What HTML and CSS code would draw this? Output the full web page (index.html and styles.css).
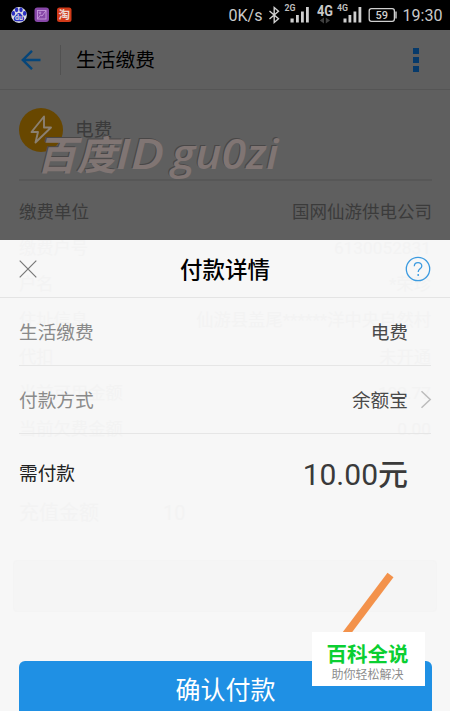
FILE: index.html
```html
<!DOCTYPE html>
<html lang="zh-CN">
<head>
<meta charset="utf-8">
<title>付款详情</title>
<link rel="stylesheet" href="styles.css">
</head>
<body>
<div class="screen">
  <header class="status">
    <svg width="450" height="30" viewBox="0 0 450 30">
      <circle cx="19" cy="15" r="7.9" fill="#d9dbe0"/>
      <g fill="#2b2fc0">
        <ellipse cx="13.4" cy="13.4" rx="1.7" ry="2.3"/>
        <ellipse cx="16.6" cy="9.8" rx="1.7" ry="2.4"/>
        <ellipse cx="21" cy="9.8" rx="1.7" ry="2.4"/>
        <ellipse cx="24.6" cy="13.4" rx="1.7" ry="2.3"/>
        <path d="M19 13c-2 0-2.500 2-4 3.300-2.200 2-1.200 5 1.200 5h5.600c2.400 0 3.400-3 1.200-5C21.500 15 21 13 19 13z"/>
      </g>
      <text x="19" y="20.300" class="st-du">du</text>
      <rect x="34.500" y="7.500" width="14.500" height="14.500" rx="3" fill="#8747a8"/>
      <g fill="none" stroke="#c79bdc" stroke-width=".9"><rect x="37.500" y="10.500" width="8.500" height="8.500"/><path d="M38 18.500l2.500-3.500 1.500 1 3.800-5"/><circle cx="40" cy="12.800" r=".8"/></g>
      <rect x="57" y="7.500" width="14.500" height="14.500" rx="2.500" fill="#d13a18"/>
      <text x="64.200" y="19" class="st-tao">淘</text>
      <text x="228.500" y="21" class="st-main" textLength="34" lengthAdjust="spacingAndGlyphs">0K/s</text>
      <path d="M269.500 11l9 7.800-4.300 3.700V7.500l4.300 3.700-9 7.800" fill="none" stroke="#d0d0d0" stroke-width="1.400"/>
      <text x="284.500" y="11" class="st-tiny" textLength="11" lengthAdjust="spacingAndGlyphs">2G</text>
      <g fill="#cfcfcf">
        <rect x="290.500" y="18.500" width="3.200" height="4"/><rect x="296" y="15" width="2.800" height="7.500"/><rect x="301" y="11.500" width="2.800" height="11"/><rect x="306" y="7" width="2.800" height="15.500"/>
        <rect x="343.500" y="18.500" width="3" height="4"/><rect x="348.500" y="15" width="2.800" height="7.500"/><rect x="353.500" y="11.500" width="2.800" height="11"/><rect x="358.500" y="7" width="2.800" height="15.500"/>
      </g>
      <text x="317" y="16" class="st-4g" textLength="16" lengthAdjust="spacingAndGlyphs">4G</text>
      <path d="M324 17.500v6l-4.200-3zM325.800 17.500v6l4.200-3z" fill="#3f3f3f"/>
      <text x="337" y="11" class="st-tiny" textLength="11" lengthAdjust="spacingAndGlyphs">4G</text>
      <rect x="369.200" y="8.700" width="25.200" height="12.600" rx="2.200" fill="none" stroke="#d0d0d0" stroke-width="1.300"/>
      <path d="M396 11.500v7" stroke="#d0d0d0" stroke-width="1.400"/>
      <text x="381.700" y="19.200" class="st-bat">59</text>
      <text x="402.500" y="21" class="st-main" textLength="40" lengthAdjust="spacingAndGlyphs">19:30</text>
    </svg>
  </header>

  <nav class="nav">
    <svg class="back" width="20" height="20" viewBox="0 0 20 20"><path d="M19.500 10H2M11 .8L1.800 10l9.200 9.200" fill="none" stroke="#06467a" stroke-width="2.400"/></svg>
    <span class="nav-line"></span>
    <h1 class="nav-title">生活缴费</h1>
    <span class="more"><i></i><i></i><i></i></span>
  </nav>

  <section class="bill">
    <div class="bill-head">
      <svg width="44" height="44" viewBox="0 0 44 44"><circle cx="22" cy="22" r="22" fill="#684700"/><path d="M25 8.500L12.500 24h6.500L16.500 34.500 32 19.500h-7z" fill="none" stroke="#8b8071" stroke-width="1.900" stroke-linejoin="round"/></svg>
      <span class="bill-name">电费</span>
    </div>
    <div class="bill-row"><span>缴费单位</span><span>国网仙游供电公司</span></div>
  </section>

  <svg class="signature" width="260" height="56" viewBox="0 0 260 56">
    <g class="sig-shade"><text class="sig-cjk" transform="translate(3.500 34.500) skewX(-14)">百度</text><text x="83" y="34" class="sig-lat" textLength="48" lengthAdjust="spacingAndGlyphs">ID</text><text x="138.500" y="34" class="sig-lat" textLength="107" lengthAdjust="spacingAndGlyphs">gu0zi</text></g>
    <g class="sig-face"><text class="sig-cjk" transform="translate(4.500 35.500) skewX(-14)">百度</text><text x="84" y="35" class="sig-lat" textLength="48" lengthAdjust="spacingAndGlyphs">ID</text><text x="139.500" y="35" class="sig-lat" textLength="107" lengthAdjust="spacingAndGlyphs">gu0zi</text></g>
  </svg>

  <main class="sheet">
    <div class="ghost">
      <div class="ghost-row"><span>缴费户号</span><span>6130052831</span></div>
      <div class="ghost-row"><span>户名</span><span>*荣珍</span></div>
      <div class="ghost-row"><span>住址信息</span><span>仙游县盖尾******洋中央自然村</span></div>
      <div class="ghost-row"><span>代扣</span><span>未开通</span></div>
      <div class="ghost-row"><span>当前可用金额</span><span>102.77</span></div>
      <div class="ghost-row"><span>当前欠费金额</span><span>0.00</span></div>
      <div class="ghost-input"><span>充值金额</span><span>10</span></div>
      <div class="ghost-box"></div>
    </div>
    <div class="sheet-head">
      <svg width="18" height="18" viewBox="0 0 18 18"><path d="M.7.700l16.600 16.600M17.300.700L.7 17.300" stroke="#777" stroke-width="1.200"/></svg>
      <h2 class="sheet-title">付款详情</h2>
      <svg width="26" height="26" viewBox="0 0 26 26"><circle cx="13" cy="13" r="11.700" fill="none" stroke="#3c9be0" stroke-width="1.300"/><path d="M9.300 10.300c0-5 7.500-4.800 7.500-.4 0 2.900-3.600 3-3.600 6.100" fill="none" stroke="#3c9be0" stroke-width="1.300"/><circle cx="13.200" cy="19" r=".95" fill="#3c9be0"/></svg>
    </div>
    <div class="rows">
      <div class="row"><span class="label">生活缴费</span><span class="value">电费</span></div>
      <div class="row"><span class="label">付款方式</span><span class="value">余额宝</span><svg class="chev" width="12" height="19" viewBox="0 0 12 19"><path d="M1.500 1.200l8.700 8.300-8.700 8.300" fill="none" stroke="#bcbcbc" stroke-width="1.500"/></svg></div>
      <div class="row total"><span class="label">需付款</span><span class="amount">10.00<b>元</b></span></div>
    </div>
    <button class="confirm">确认付款</button>
  </main>

  <svg class="pointer" width="70" height="80" viewBox="0 0 70 80"><path d="M50.500 9L0 76" stroke="#f3924b" stroke-width="7.500"/></svg>
  <aside class="badge"><strong>百科全说</strong><small>助你轻松解决</small></aside>
</div>
</body>
</html>
```

FILE: styles.css
```css
* { box-sizing: border-box; }
body { margin: 0; }
.screen {
  position: relative;
  display: flex;
  flex-direction: column;
  width: 450px;
  height: 711px;
  overflow: hidden;
  background: #5f5f5f;
  font-family: Roboto, "Noto Sans CJK SC", sans-serif;
}
.status { height: 30px; flex: none; background: #000; }
.status svg { display: block; }
.st-main { font-size: 16.500px; fill: #c9c9c9; }
.st-tiny { font-size: 8.500px; font-weight: 700; fill: #bdbdbd; }
.st-4g { font-size: 14.500px; font-weight: 700; fill: #c8c8c8; }
.st-bat { font-size: 11px; font-weight: 500; fill: #d0d0d0; text-anchor: middle; }
.st-du { font-size: 7px; font-weight: 700; fill: #d9dbe0; text-anchor: middle; }
.st-tao { font-size: 11.500px; font-weight: 700; fill: #ecd8d2; text-anchor: middle; }

.nav {
  display: flex;
  align-items: center;
  flex: none;
  height: 60px;
  padding: 0 31px 0 21px;
  border-bottom: 1px solid #555;
}
.nav-line { width: 1px; height: 30px; margin: 0 15px 0 19px; background: #515151; }
.nav-title { margin: 0; padding-top: 3px; font-size: 19.800px; line-height: 30px; font-weight: 400; color: #000; }
.more { display: grid; gap: 3px; margin-left: auto; }
.more i { width: 6px; height: 6px; background: #063a6b; }

.bill { padding: 0 18px 0 19px; color: #3b3b3b; }
.bill-head { display: flex; gap: 12px; height: 91px; padding-top: 18px; border-bottom: 2px solid #575757; }
.bill-name { font-size: 18.700px; line-height: 44px; }
.bill-row { display: flex; justify-content: space-between; font-size: 17.500px; line-height: 62px; }

.signature { position: absolute; left: 32px; top: 134px; overflow: visible; }
.sig-cjk { font-size: 40px; font-weight: 700; }
.sig-lat { font-family: "Open Sans", sans-serif; font-size: 42px; font-weight: 600; font-style: italic; }
.sig-shade { fill: #494747; }
.sig-face { fill: #807573; }

.sheet { position: absolute; left: 0; top: 240px; width: 450px; height: 471px; background: #f7f7f7; overflow: hidden; }
.ghost { position: absolute; inset: 0; padding: 0 19px; color: #f3f3f3; font-size: 17.300px; }
.ghost-row { display: flex; justify-content: space-between; height: 36.200px; line-height: 16px; white-space: nowrap; }
.ghost-input { display: flex; gap: 64px; margin-top: 41px; font-size: 20px; line-height: 30px; }
.ghost-box { height: 52px; margin: 32px -6px 0; border: 1px solid #f4f4f4; border-radius: 4px; background: #f5f5f5; }

.sheet-head {
  position: relative;
  display: flex;
  align-items: center;
  justify-content: space-between;
  height: 58px;
  padding: 0 19px;
  border-bottom: 1px solid #e4e4e4;
}
.sheet-title { margin: 0 0 2px 8px; font-size: 22.500px; font-weight: 500; color: #000; }
.rows { position: relative; padding: 0 19px; }
.row {
  display: flex;
  align-items: center;
  height: 68px;
  padding-right: 23px;
  border-bottom: 1px solid #e6e6e6;
  font-size: 18.700px;
}
.label { padding-bottom: 3px; color: #8a8a8a; }
.value { margin-left: auto; padding-bottom: 3px; color: #4a4a4a; }
.chev { margin: 0 -24px 0 12px; }
.total { height: 78px; border-bottom: 0; }
.total .label { color: #222; }
.amount { margin-left: auto; padding-bottom: 3px; font-size: 30px; color: #3a3a3a; }
.amount b { font-weight: 500; }
.confirm {
  position: relative;
  display: block;
  width: 413px;
  height: 60px;
  margin: 149px 0 0 19px;
  padding: 0 0 6px;
  border: 0;
  border-radius: 6px;
  background: #1f90e4;
  color: #fff;
  font: 400 25px "Noto Sans CJK SC", sans-serif;
}
.pointer { position: absolute; left: 340px; top: 566px; }
.badge {
  position: absolute;
  left: 312px;
  top: 632px;
  display: flex;
  flex-direction: column;
  align-items: center;
  width: 113px;
  height: 54px;
  padding: 10px 2px 0 0;
  background: #fff;
}
.badge strong { font-size: 20.500px; line-height: 26px; color: #0bcf32; }
.badge small { font-size: 12px; line-height: 14px; color: #8d8d8d; }
```
